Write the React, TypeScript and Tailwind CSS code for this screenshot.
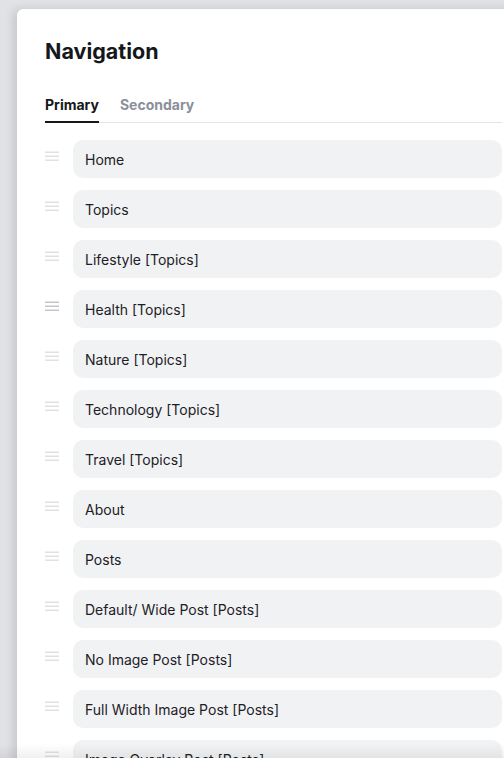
import { useState } from "react";

const items = [
  "Home",
  "Topics",
  "Lifestyle [Topics]",
  "Health [Topics]",
  "Nature [Topics]",
  "Technology [Topics]",
  "Travel [Topics]",
  "About",
  "Posts",
  "Default/ Wide Post [Posts]",
  "No Image Post [Posts]",
  "Full Width Image Post [Posts]",
  "Image Overlay Post [Posts]",
  "Sidebar Post [Posts]",
];

function Handle({ active }: { active?: boolean }) {
  return (
    <svg width="14" height="10" viewBox="0 0 14 10" className={active ? "text-[#c3c6cb]" : "text-[#dfe1e5]"}>
      <rect x="0" y="0.5" width="14" height="1.5" fill="currentColor" />
      <rect x="0" y="4.5" width="14" height="1.5" fill="currentColor" />
      <rect x="0" y="8.5" width="14" height="1.5" fill="currentColor" />
    </svg>
  );
}

export default function App() {
  const [tab, setTab] = useState<"primary" | "secondary">("primary");

  return (
    <div
      className="relative h-[758px] w-[504px] overflow-hidden bg-[#e1e2e5] pl-[17px] pt-[9px]"
      style={{ fontFamily: "Inter, 'Noto Sans', sans-serif" }}
    >
      <div className="w-[513px] h-[800px] rounded-tl-[6px] bg-white px-[28px] pt-[28px] shadow-[-4px_0_10px_rgba(0,0,0,0.12)]">
        <h1 className="text-[21.5px] leading-[28px] font-bold text-[#15171a]">Navigation</h1>

        <div className="mt-[30px] flex gap-[21px] border-b border-[#e3e4e7]">
          <button
            onClick={() => setTab("primary")}
            className={`-mb-px pb-[6px] text-[14px] leading-[20px] font-bold border-b-2 ${
              tab === "primary" ? "border-[#15171a] text-[#15171a]" : "border-transparent text-[#8a909a]"
            }`}
          >
            Primary
          </button>
          <button
            onClick={() => setTab("secondary")}
            className={`-mb-px pb-[6px] text-[14px] leading-[20px] font-bold border-b-2 ${
              tab === "secondary" ? "border-[#15171a] text-[#15171a]" : "border-transparent text-[#8a909a]"
            }`}
          >
            Secondary
          </button>
        </div>

        <ul className="mt-[17px] flex flex-col gap-[12px]">
          {items.map((item) => (
            <li key={item} className="flex items-start">
              <div className="w-[28px] shrink-0 pt-[11px]">
                <Handle active={item === "Health [Topics]"} />
              </div>
              <div className="flex h-[38px] flex-1 items-center rounded-[10px] bg-[#f1f2f4] px-[12px] text-[14px] text-[#1d2025]">
                {item}
              </div>
            </li>
          ))}
        </ul>
      </div>

      {/* fade at the bottom edge */}
      <div className="pointer-events-none absolute bottom-0 left-0 right-0 h-[14px] bg-gradient-to-t from-black/[0.06] to-transparent" />
    </div>
  );
}
